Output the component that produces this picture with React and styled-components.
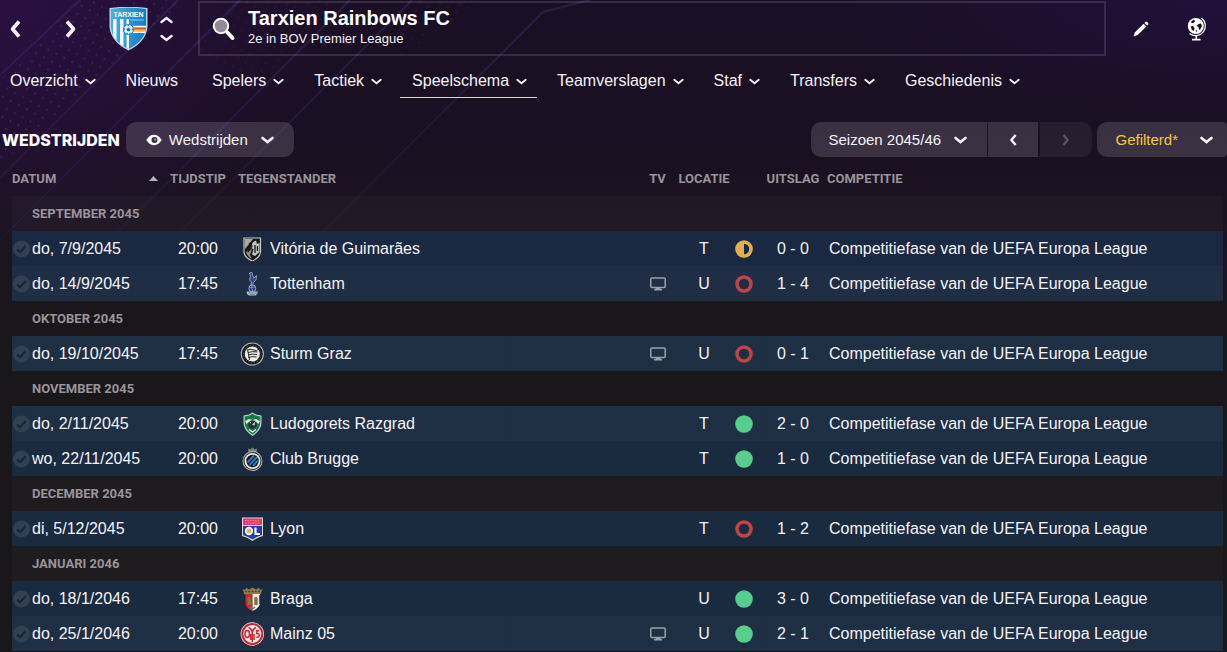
import React from 'react'

import styled, { createGlobalStyle, css } from 'styled-components'

const GlobalStyle = createGlobalStyle`
  * {
    box-sizing: border-box;
  }

  body {
    margin: 0;
    overflow: hidden;
    background-color: #1a171b;
    color: #f4f2f6;
    font-family: "Liberation Sans", Arial, sans-serif;
    font-size: 16px;
  }

  button, select {
    font: inherit;
    color: inherit;
    border: 0;
    padding: 0;
    background: none;
    cursor: pointer;
  }

  svg {
    display: block;
    flex: none;
  }
`

const Page = styled.div`
  position: relative;
  min-height: 100vh;
  background:
    radial-gradient(ellipse 340px 260px at 0 0, rgba(58, 18, 96, 0.5), transparent),
    radial-gradient(ellipse 400px 120px at 100% 0, rgba(36, 16, 68, 0.7), transparent),
    linear-gradient(#1b0f25 0, #1b0f23 130px, #1c1320 210px, #1a171b 310px);
`

const Backdrop = styled.svg`
  position: absolute;
  top: 0;
  left: 0;
  pointer-events: none;
`

const Content = styled.div`
  position: relative;
`

const TopBar = styled.header`
  display: flex;
  align-items: center;
  padding: 1px 16px 0 6px;
`

const History = styled.div`
  display: flex;
  gap: 38px;
  margin-right: 29px;
`

const IconButton = styled.button`
  display: flex;
  align-items: center;
  justify-content: center;
  width: ${props => props.$width || 28}px;
  height: 28px;
`

const Switcher = styled.div`
  display: flex;
  flex-direction: column;
  gap: 8px;
  margin: 0 25px 0 12px;

  button {
    display: flex;
    align-items: center;
    height: 10px;
  }
`

const SearchBox = styled.button`
  display: flex;
  flex: 1;
  align-items: center;
  gap: 12px;
  height: 55px;
  padding: 0 12px;
  border: 2px solid rgba(255, 255, 255, 0.12);
  text-align: left;
`

const ClubName = styled.span`
  display: block;
  font-size: 20px;
  font-weight: bold;
  line-height: 22px;
  color: #fff;
`

const ClubStatus = styled.span`
  display: block;
  padding-bottom: 2px;
  font-size: 13px;
  line-height: 20px;
`

const Tools = styled.div`
  display: flex;
  gap: 28px;
  margin-left: 21px;
`

const Nav = styled.nav`
  display: flex;
  gap: 8px;
`

const NavItem = styled.a`
  display: flex;
  align-items: center;
  gap: 7px;
  padding: 15px ${props => (props.$plain ? 14 : 10)}px 6px 12px;
  border-bottom: 1px solid ${props => (props.$active ? '#d5d2d8' : 'transparent')};
  line-height: 20px;
  color: inherit;
  text-decoration: none;

  &:first-child {
    padding-left: 10px;
  }
`

const Toolbar = styled.div`
  display: flex;
  align-items: center;
  margin-top: 24px;
  padding-left: 2px;
`

const Title = styled.h1`
  margin: 0 6px 0 0;
  font-family: Inter, sans-serif;
  font-size: 16px;
  font-weight: 800;
  color: #fff;
`

const pill = css`
  height: 35px;
  background-color: rgba(255, 255, 255, 0.14);
  font-size: 15px;
`

const Dropdown = styled.label`
  ${pill}
  display: grid;
  align-items: center;
  border-radius: ${props => props.$radius};

  > * {
    grid-area: 1 / 1;
  }

  svg {
    pointer-events: none;
  }

  svg:first-of-type:not(:last-of-type) {
    margin-left: 20px;
  }

  svg:last-of-type {
    justify-self: end;
    margin-right: ${props => props.$end}px;
  }

  select {
    appearance: none;
    height: 35px;
    padding: 0 ${props => props.$end + 26}px 0 ${props => props.$start}px;
  }

  option {
    color: #222;
  }
`

const Season = styled.div`
  display: flex;
  gap: 1px;
  margin: 0 5px 0 auto;
`

const Step = styled.button`
  ${pill}
  display: flex;
  align-items: center;
  justify-content: center;
  width: 50px;

  &:last-child {
    width: 52px;
    margin-left: 1px;
    border-radius: 0 10px 10px 0;
  }

  &:disabled {
    background-color: rgba(255, 255, 255, 0.06);
    color: #5d5563;
  }
`

const Filter = styled.button`
  ${pill}
  display: flex;
  align-items: center;
  gap: 22px;
  padding: 0 14px 0 18px;
  border-radius: 10px 4px 4px 10px;
  color: #f3c83c;

  svg {
    color: #fff;
  }
`

const Fixtures = styled.div`
  padding: 0 4px 0 12px;
`

const Table = styled.table`
  width: 100%;
  table-layout: fixed;
  border-collapse: collapse;
  white-space: nowrap;

  th, td {
    padding: 0;
    text-align: left;
  }

  th {
    font-family: Roboto, sans-serif;
    font-size: 13px;
    font-weight: bold;
    color: #98949a;
  }
`

const Col = styled.col`
  width: ${props => (props.$width ? `${props.$width}px` : 'auto')};
`

const HeadRow = styled.tr`
  height: 39px;
`

const HeadCell = styled.th`
  && {
    padding-top: 4px;
    padding-left: ${props => props.$indent || 0}px;
    text-align: ${props => props.$align || 'left'};
  }
`

const SortHead = styled.span`
  display: flex;
  align-items: center;
  justify-content: space-between;
  padding-right: 2px;
`

const Body = styled.tbody`
  tr {
    height: 35px;
  }

  tr:nth-child(odd) td,
  tr:nth-child(odd) th {
    background-image: linear-gradient(rgba(255, 255, 255, 0.025), rgba(255, 255, 255, 0.025));
  }
`

const MonthCell = styled.th`
  && {
    padding-left: 20px;
  }
`

const MatchRow = styled.tr`
  background-color: rgba(27, 60, 98, 0.52);
`

const Cell = styled.td`
  && {
    text-align: ${props => props.$align || 'left'};
    padding-left: ${props => props.$indent || 0}px;
  }

  > svg {
    margin: ${props => (props.$align === 'center' ? '0 auto' : 0)};
  }
`

const Tick = styled.label`
  display: block;
  position: relative;

  input {
    position: absolute;
    width: 18px;
    height: 18px;
    margin: 0;
    opacity: 0;
  }
`

const Team = styled.span`
  display: flex;
  align-items: center;
  gap: 6px;
`

const shapes = {
  down: 'M1.5 1.5 L6.5 5.5 L11.5 1.5',
  up: 'M1.5 5.5 L6.5 1.5 L11.5 5.5'
}

const Chevron = ({ dir = 'down', size = 13, weight = 2 }) => (
  <svg width={size} height={Math.round(size * 0.6)} viewBox="0 0 13 7" fill="none" stroke="currentColor" strokeWidth={weight} strokeLinecap="round">
    <path d={shapes[dir]} />
  </svg>
)

const Arrow = ({ right, size = 18 }) => (
  <svg width={size * 0.67} height={size} viewBox="0 0 12 18" fill="none" stroke="currentColor" strokeWidth="3.6" strokeLinejoin="round">
    <path d={right ? 'M2 1.5 L8.5 9 L2 16.5' : 'M10 1.5 L3.5 9 L10 16.5'} />
  </svg>
)

const Search = () => (
  <svg width="24" height="24" viewBox="0 0 24 24">
    <path d="M15 15 L20.5 21" stroke="#fff" strokeWidth="4" strokeLinecap="round" />
    <circle cx="9" cy="9" r="7.2" fill="#94899b" stroke="#fff" strokeWidth="2" />
  </svg>
)

const Pencil = () => (
  <svg width="16" height="16" viewBox="0 0 16 16" fill="#fff">
    <path d="M0.5 15.5 L2 11.3 L10.6 2.7 L13.3 5.4 L4.7 14 Z" />
    <path d="M11.4 1.9 L12.4 0.9 Q13.2 0.2 14.2 1 L15 1.8 Q15.8 2.8 15.1 3.6 L14.1 4.6 Z" />
  </svg>
)

const Globe = () => (
  <svg width="20" height="24" viewBox="0 0 20 24">
    <circle cx="8.8" cy="9" r="8" fill="#fff" />
    <path d="M14.5 1 A9.8 9.8 0 1 1 2.5 16.6" fill="none" stroke="#fff" strokeWidth="1.2" />
    <path d="M4.5 4 L7 2.5 L8 4.5 L6 6.3 L4.2 5.8 Z M3.6 9.5 L6 9 L7.5 11 L7 14 L5 13 Z M9.5 9 L11.5 7 L14 6.5 L15 9 L13.5 12 L12 13 L11.5 10 Z M8.5 13.500 L10 13 L9.6 15.5 Z" fill="#1d1029" />
    <path d="M9.3 19 V22 M5 22.6 H13.6" stroke="#fff" strokeWidth="1.6" />
  </svg>
)

const Eye = () => (
  <svg width="16" height="12" viewBox="0 0 16 12">
    <path d="M0.3 6 Q3.5 0.8 8 0.8 Q12.5 0.8 15.7 6 Q12.5 11.2 8 11.2 Q3.5 11.2 0.3 6 Z" fill="#fff" />
    <circle cx="8.5" cy="6" r="3" fill="#3a303f" />
    <circle cx="9.2" cy="5.6" r="1.1" fill="#9d97a1" />
  </svg>
)

const SortMark = () => (
  <svg width="9" height="5" viewBox="0 0 9 5">
    <path d="M0 5 L4.5 0 L9 5 Z" fill="#b5b1b7" />
  </svg>
)

const TickMark = () => (
  <svg width="18" height="18" viewBox="0 0 18 18">
    <circle cx="9.5" cy="9" r="8.5" fill="#334053" />
    <path d="M5 9.5 L8 12.2 L13.8 6" fill="none" stroke="#17263a" strokeWidth="2.2" />
  </svg>
)

const Monitor = () => (
  <svg width="16" height="14" viewBox="0 0 16 14">
    <rect x="0.8" y="1" width="14.4" height="9.6" rx="1" fill="none" stroke="#98a1aa" strokeWidth="1.5" />
    <path d="M6 10.5 H10 L10.8 12 H12 V13.5 H4 V12 H5.2 Z" fill="#98a1aa" />
  </svg>
)

const Result = ({ type }) => (
  <svg width="18" height="18" viewBox="0 0 18 18">
    {type === 'win' && <circle cx="9" cy="9" r="8.8" fill="#56ce8c" />}
    {type === 'loss' && <circle cx="9" cy="9" r="7" fill="none" stroke="#bd4545" strokeWidth="3.6" />}
    {type === 'draw' && (
      <>
        <circle cx="9" cy="9" r="8.8" fill="#e3ad50" />
        <path d="M9 3.8 A5.2 5.2 0 0 1 9 14.2 Z" fill="#1b2841" />
      </>
    )}
  </svg>
)

const ClubCrest = () => (
  <svg width="39" height="44" viewBox="0 0 39 44">
    <defs>
      <clipPath id="shield">
        <path d="M2 2 Q19.5 -0.5 37 2 V20 Q36 34 19.5 42 Q3 34 2 20 Z" />
      </clipPath>
      <linearGradient id="sky" x1="0" x2="1">
        <stop offset="0" stopColor="#47b5e8" />
        <stop offset="1" stopColor="#1277bd" />
      </linearGradient>
    </defs>
    <path d="M0.5 1 Q19.5 -1.5 38.5 1 V20 Q37 35 19.5 43.5 Q2 35 0.5 20 Z" fill="#b9d6e6" />
    <g clipPath="url(#shield)">
      <rect width="39" height="44" fill="url(#sky)" />
      <path d="M4 12 H7.5 V44 H4 Z M11 12 H14.5 V44 H11 Z M17.5 12 H20 V44 H17.5 Z" fill="#f5fbff" />
      <path d="M21 13 H35" stroke="#8ecbed" />
      <path d="M24 19.8 H37" stroke="#fff" strokeWidth="2" />
      <path d="M24 21.5 H37" stroke="#e55346" strokeWidth="2" />
      <path d="M24 23.5 H37" stroke="#f4c94b" strokeWidth="2" />
      <path d="M24 25.3 H37" stroke="#fff" strokeWidth="1.5" />
    </g>
    <circle cx="19.5" cy="22.5" r="5" fill="#e9f6fd" stroke="#1a7fc0" strokeWidth="1" />
    <path d="M19.5 20.5 L21.5 22 L20.7 24.3 H18.3 L17.5 22 Z M18.5 18 H20.5 L19.5 19.3 Z M15 21 L16.3 22.3 L15.3 24 Z M24 21 L22.7 22.3 L23.7 24 Z M17 26.5 L18 25.3 L19 27 Z M22 26.5 L21 25.3 L20 27 Z" fill="#1773b4" />
    <text x="19.5" y="10" textAnchor="middle" fontFamily="Liberation Sans" fontSize="7" fontWeight="bold" fill="#fff">TARXIEN</text>
  </svg>
)

const crests = {
  guimaraes: (
    <>
      <path d="M4 1 H20.5 V15 Q20 20.5 12.2 24 Q4.5 20.5 4 15 Z" fill="#17171a" stroke="#c9c9c6" strokeWidth="1.2" />
      <path d="M5 2 H13 L5 12 Z" fill="#aaa9a4" />
      <path d="M13 5 L16 3.5 L17 7 L19.5 6 V15 L15 19 L12 17.5 L13.5 12 L10.5 11 Z" fill="#c2c1bb" />
      <path d="M6 15 L12 12 L10 18 L12 22 Q7 19.5 6 15 Z" fill="#8c8b86" />
      <path d="M9 6 L12 9 L8 15 M15 8 V16 M17.5 9 V14" stroke="#17171a" strokeWidth="1.3" fill="none" />
    </>
  ),
  tottenham: (
    <>
      <path d="M9.5 1 L12 0.5 L12.5 3 L14 6 L16.5 3.5 L16 8 L13.5 10.5 L12.5 13 L11 13 L11.5 10 L9.5 8 L10.5 4.5 Z" fill="#31478f" stroke="#a5b2cd" strokeWidth="0.8" />
      <circle cx="12.3" cy="16.3" r="3.5" fill="#263b81" stroke="#a5b2cd" strokeWidth="0.9" />
      <path d="M9.5 15 Q12 16.5 15 14.5 M12 13 Q11 16.5 13 19.5" stroke="#a5b2cd" strokeWidth="0.7" fill="none" />
      <path d="M6.5 19.5 L18 19.5 L17 22 L15.5 23.5 H9 L7 22 Z" fill="#aeb8cd" />
      <path d="M8 21 H17 M10 22.7 H15" stroke="#627196" strokeWidth="0.7" />
    </>
  ),
  sturm: (
    <>
      <circle cx="12.3" cy="12" r="11.6" fill="#b8b8b7" />
      <circle cx="12.3" cy="12" r="10.5" fill="#121416" />
      <circle cx="12.3" cy="12" r="8.9" fill="none" stroke="#666" strokeWidth="1" strokeDasharray="1.3 1.5" />
      <circle cx="12.3" cy="12" r="7.6" fill="#eeeeec" />
      <path d="M7.5 8 Q11 6.5 14 8 T18 7.500 M8 10.5 Q12 9 17.5 10 M8.3 13 Q12 11.5 17 12.5 M8.5 15.5 Q12 14 16.5 15 M7.5 7.5 L9.5 18" stroke="#202226" strokeWidth="1" fill="none" />
    </>
  ),
  ludogorets: (
    <>
      <path d="M12.5 0.5 L16 2.5 L21.5 3.5 V10 Q22 18 12.5 24 Q3 18 3.5 10 V3.5 L9 2.5 Z" fill="#b9d5c5" />
      <path d="M12.5 1.8 L15.5 3.5 L20.3 4.5 V10 Q20.5 17.5 12.5 22.5 Q4.5 17.5 4.7 10 V4.5 L9.5 3.5 Z" fill="#157a4c" />
      <path d="M5 9 L9 7 L12.5 8 L16 7 L20 9 L18.5 12 L16 10 H9 L6.500 12 Z" fill="#d9e7df" />
      <circle cx="12.5" cy="12.5" r="4.3" fill="#292f33" />
      <path d="M12 13 L15.5 9 L14.5 13.5 Z M9.5 11 L11 9.5 V11.5 Z" fill="#c8cccd" />
      <path d="M9 17.5 L12.5 20 L16 17.5" stroke="#e6f0ea" strokeWidth="1.2" fill="none" />
    </>
  ),
  brugge: (
    <>
      <path d="M8.5 5 L8 1.5 L10.5 2.5 L12.5 0.3 L14.5 2.5 L17 1.5 L16.5 5 Z" fill="#84827c" />
      <circle cx="12.5" cy="14" r="10" fill="#b7b4ac" />
      <circle cx="12.5" cy="14" r="9" fill="#292e34" />
      <circle cx="12.5" cy="14" r="8" fill="#eae5d4" />
      <circle cx="12.5" cy="14" r="6.2" fill="#10151d" />
      <path d="M7.5 15.5 L14 8.5 M9.5 18 L17 10 M13 19 L18 13.5" stroke="#277fc6" strokeWidth="1.9" />
    </>
  ),
  lyon: (
    <>
      <path d="M2 0.5 H23 V19 Q18 20 12.5 24 Q7 20 2 19 Z" fill="#e4dccb" />
      <path d="M3 1.5 H22 V8 H3 Z" fill="#e9356b" />
      <path d="M5 3.5 H20 M5 6 H20" stroke="#f27a9d" strokeWidth="1" strokeDasharray="1.5 1" />
      <path d="M3 9 H22 V18 Q17 19.5 12.5 22.5 Q8 19.5 3 18 Z" fill="#2439b7" />
      <circle cx="9" cy="14" r="3.3" fill="#dcb573" stroke="#fff" strokeWidth="1.7" />
      <path d="M15.5 10.5 V17 H20" stroke="#fff" strokeWidth="2.2" fill="none" />
    </>
  ),
  braga: (
    <>
      <path d="M2.5 2 L5 3 L6 0.8 L9 2.5 L12.5 0.5 L16 2.5 L19 0.8 L20 3 L22.5 2 L20.5 7.5 H4.5 Z" fill="#8d7c4e" />
      <path d="M5 4.5 H20" stroke="#4f452e" strokeWidth="1.3" strokeDasharray="2 1.2" />
      <path d="M5.5 7 H12.5 V24 Q6.5 21.5 5.5 17 Z" fill="#d12430" />
      <path d="M12.5 7 H20 V17 Q18.5 21.5 12.5 24 Z" fill="#f0eeea" />
      <path d="M7.5 11 L9.2 9.5 L11 11 V18 H7.5 Z M14.2 11 L16 9.5 L17.7 11 V18 H14.2 Z" fill="#8b7437" />
      <path d="M19.5 8 V17" stroke="#4b5898" strokeWidth="1.2" />
      <path d="M10 20 L12.5 22 L15 20" stroke="#3f8161" strokeWidth="1.3" fill="none" />
    </>
  ),
  mainz: (
    <>
      <circle cx="12.3" cy="12" r="11.7" fill="#eee9e9" />
      <circle cx="12.3" cy="12" r="10" fill="none" stroke="#cf2635" strokeWidth="2" />
      <ellipse cx="7.2" cy="12" rx="2.3" ry="3.4" fill="none" stroke="#cf2635" strokeWidth="1.5" />
      <path d="M8.5 5.500 Q12 7 12.3 11 V20 M16 5.5 Q12.700 7 12.300 11 M10.7 12 V18 M14 12 V18" stroke="#cf2635" strokeWidth="1.5" fill="none" />
      <path d="M19.3 8.8 H16.7 V11.5 Q19.6 11.3 19.3 13.6 Q19 15.5 16.3 15.2" stroke="#cf2635" strokeWidth="1.5" fill="none" />
    </>
  )
}

const Crest = ({ name }) => (
  <svg width="24" height="24" viewBox="0 0 24 24">
    {crests[name]}
  </svg>
)

const tabs = ['Overzicht', 'Nieuws', 'Spelers', 'Tactiek', 'Speelschema', 'Teamverslagen', 'Staf', 'Transfers', 'Geschiedenis']

const competition = 'Competitiefase van de UEFA Europa League'

const rows = [
  { month: 'SEPTEMBER 2045' },
  { date: 'do, 7/9/2045', time: '20:00', team: 'Vitória de Guimarães', crest: 'guimaraes', place: 'T', result: 'draw', score: '0 - 0' },
  { date: 'do, 14/9/2045', time: '17:45', team: 'Tottenham', crest: 'tottenham', tv: true, place: 'U', result: 'loss', score: '1 - 4' },
  { month: 'OKTOBER 2045' },
  { date: 'do, 19/10/2045', time: '17:45', team: 'Sturm Graz', crest: 'sturm', tv: true, place: 'U', result: 'loss', score: '0 - 1' },
  { month: 'NOVEMBER 2045' },
  { date: 'do, 2/11/2045', time: '20:00', team: 'Ludogorets Razgrad', crest: 'ludogorets', place: 'T', result: 'win', score: '2 - 0' },
  { date: 'wo, 22/11/2045', time: '20:00', team: 'Club Brugge', crest: 'brugge', place: 'T', result: 'win', score: '1 - 0' },
  { month: 'DECEMBER 2045' },
  { date: 'di, 5/12/2045', time: '20:00', team: 'Lyon', crest: 'lyon', place: 'T', result: 'loss', score: '1 - 2' },
  { month: 'JANUARI 2046' },
  { date: 'do, 18/1/2046', time: '17:45', team: 'Braga', crest: 'braga', place: 'U', result: 'win', score: '3 - 0' },
  { date: 'do, 25/1/2046', time: '20:00', team: 'Mainz 05', crest: 'mainz', tv: true, place: 'U', result: 'win', score: '2 - 1' }
]

const Match = ({ row }) => (
  <MatchRow>
    <Cell>
      <Tick>
        <input type="checkbox" aria-label={row.date} />
        <TickMark />
      </Tick>
    </Cell>
    <Cell>{row.date}</Cell>
    <Cell $align="center">{row.time}</Cell>
    <Cell $indent={4}>
      <Team>
        <Crest name={row.crest} />
        {row.team}
      </Team>
    </Cell>
    <Cell $align="center">{row.tv && <Monitor />}</Cell>
    <Cell $align="center">{row.place}</Cell>
    <Cell $indent={2}>
      <Result type={row.result} />
    </Cell>
    <Cell $align="center">{row.score}</Cell>
    <Cell $indent={2}>{competition}</Cell>
  </MatchRow>
)

export default function App() {
  return (
    <Page>
      <GlobalStyle />
      <Backdrop width="700" height="330" viewBox="0 0 700 330" fill="none" aria-hidden="true">
        <defs>
          <pattern id="dots" width="9" height="9" patternUnits="userSpaceOnUse" patternTransform="rotate(28)">
            <circle cx="3" cy="3" r="1.2" fill="#54208a" />
          </pattern>
          <linearGradient id="fade" x1="0" y1="0" x2="0" y2="1">
            <stop offset="0" stopColor="#41337f" stopOpacity="0.4" />
            <stop offset="1" stopColor="#41337f" stopOpacity="0" />
          </linearGradient>
        </defs>
        <path d="M85 0 H185 L0 165 V80 Z" fill="url(#dots)" opacity="0.55" />
        <path d="M240 0 H350 L250 90 L190 50 Z M400 0 H480 L400 60 Z" fill="url(#dots)" opacity="0.2" />
        <path d="M80 0 L0 75 M178 0 L0 178 M240 0 L0 240 M350 0 L70 280 M412 0 L120 292 M590 0 L543 12 L250 305" stroke="url(#fade)" strokeWidth="2" />
      </Backdrop>
      <Content>
        <TopBar>
          <History>
            <IconButton $width={18} aria-label="Vorige"><Arrow /></IconButton>
            <IconButton $width={18} aria-label="Volgende"><Arrow right /></IconButton>
          </History>
          <ClubCrest />
          <Switcher>
            <button aria-label="Vorige club"><Chevron dir="up" weight={2.4} /></button>
            <button aria-label="Volgende club"><Chevron weight={2.4} /></button>
          </Switcher>
          <SearchBox>
            <Search />
            <span>
              <ClubName>Tarxien Rainbows FC</ClubName>
              <ClubStatus>2e in BOV Premier League</ClubStatus>
            </span>
          </SearchBox>
          <Tools>
            <IconButton aria-label="Bewerken"><Pencil /></IconButton>
            <IconButton aria-label="Wereld"><Globe /></IconButton>
          </Tools>
        </TopBar>
        <Nav>
          {tabs.map(tab => (
            <NavItem key={tab} href="#" $active={tab === 'Speelschema'} $plain={tab === 'Nieuws'}>
              {tab}
              {tab !== 'Nieuws' && <Chevron size={11} weight={2.2} />}
            </NavItem>
          ))}
        </Nav>
        <Toolbar>
          <Title>WEDSTRIJDEN</Title>
          <Dropdown $radius="10px" $start={43} $end={20}>
            <select aria-label="Weergave"><option>Wedstrijden</option></select>
            <Eye />
            <Chevron weight={2.6} />
          </Dropdown>
          <Season>
            <Dropdown $radius="10px 0 0 10px" $start={17} $end={20}>
              <select aria-label="Seizoen"><option>Seizoen 2045/46</option></select>
              <Chevron weight={2.6} />
            </Dropdown>
            <Step aria-label="Vorig seizoen"><Arrow size={12} /></Step>
            <Step aria-label="Volgend seizoen" disabled><Arrow right size={12} /></Step>
          </Season>
          <Filter>
            Gefilterd*
            <Chevron weight={2.6} />
          </Filter>
        </Toolbar>
        <Fixtures>
          <Table>
            <colgroup>
              <Col $width={20} />
              <Col $width={128} />
              <Col $width={76} />
              <Col $width={404} />
              <Col $width={35} />
              <Col $width={58} />
              <Col $width={26} />
              <Col $width={68} />
              <Col />
            </colgroup>
            <thead>
              <HeadRow>
                <HeadCell colSpan={2}>
                  <SortHead>DATUM<SortMark /></SortHead>
                </HeadCell>
                <HeadCell $align="center">TIJDSTIP</HeadCell>
                <HeadCell $indent={2}>TEGENSTANDER</HeadCell>
                <HeadCell $align="center">TV</HeadCell>
                <HeadCell $align="center">LOCATIE</HeadCell>
                <HeadCell aria-label="Resultaat" />
                <HeadCell $align="center">UITSLAG</HeadCell>
                <HeadCell>COMPETITIE</HeadCell>
              </HeadRow>
            </thead>
            <Body>
              {rows.map(row => row.month ? (
                <tr key={row.month}>
                  <MonthCell colSpan={9} scope="rowgroup">{row.month}</MonthCell>
                </tr>
              ) : (
                <Match key={row.date} row={row} />
              ))}
            </Body>
          </Table>
        </Fixtures>
      </Content>
    </Page>
  )
}
